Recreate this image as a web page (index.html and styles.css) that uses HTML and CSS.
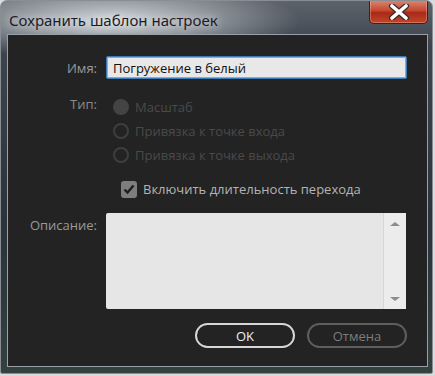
FILE: index.html
```html
<!DOCTYPE html>
<html lang="ru">
  <head>
    <meta charset="UTF-8" />
    <title>Сохранить шаблон настроек</title>
    <link rel="stylesheet" href="styles.css">
  </head>
  <body>
    <div class="window">
      <div class="titlebar">
        <span class="title">Сохранить шаблон настроек</span>
        <button class="close" aria-label="Закрыть">
          <svg width="22" height="16" viewBox="0 0 22 16">
            <path d="M4 2 L18 14 M18 2 L4 14" stroke="#3a2a2a" stroke-width="6" stroke-linecap="round" />
            <path d="M4 2 L18 14 M18 2 L4 14" stroke="#ffffff" stroke-width="3.6" stroke-linecap="round" />
          </svg>
        </button>
      </div>

      <div class="client">
        <div class="form">
          <label class="lbl lbl-name" for="name">Имя:</label>
          <input class="name" id="name" type="text" value="Погружение в белый" />

          <span class="lbl lbl-type">Тип:</span>
          <div class="radios">
            <div class="radio"><span class="dot checked"></span>Масштаб</div>
            <div class="radio"><span class="dot"></span>Привязка к точке входа</div>
            <div class="radio"><span class="dot"></span>Привязка к точке выхода</div>
          </div>

          <span></span>
          <div class="check">
            <span class="box">
              <svg width="14" height="14" viewBox="0 0 14 14">
                <path d="M2.5 7.5 L5.5 10.5 L11.5 3.5" fill="none" stroke="#1e1e1e" stroke-width="2.4" />
              </svg>
            </span>
            Включить длительность перехода
          </div>

          <label class="lbl lbl-desc" for="desc">Описание:</label>
          <div class="desc">
            <textarea id="desc"></textarea>
            <div class="scroll">
              <span class="arrow up"></span>
              <span class="arrow down"></span>
            </div>
          </div>
        </div>

        <div class="buttons">
          <button class="btn ok">OK</button>
          <button class="btn cancel">Отмена</button>
        </div>
      </div>
    </div>
  </body>
</html>
```

FILE: styles.css
```css
body {
  margin: 0;
  background: #d8dadc;
  font-family: "Open Sans", "Noto Sans", Arial, sans-serif;
  font-size: 13px;
}
.window {
  width: 431px;
  height: 372px;
  display: flex;
  flex-direction: column;
  border: 1px solid #8a8e94;
  border-radius: 7px 7px 2px 2px;
  background:
    radial-gradient(ellipse 190px 40px at 110px 20px, rgba(220, 224, 228, 0.95), rgba(220, 224, 228, 0) 100%),
    linear-gradient(180deg, #5c636b 0%, #3c444e 12%, #2a323c 60%, #33413f 100%);
  overflow: hidden;
}
.titlebar {
  height: 33px;
  display: flex;
  align-items: flex-start;
}
.title {
  margin: 9px 0 0 8px;
  font-family: "Noto Sans", "Open Sans", sans-serif;
  font-size: 15px;
  color: #1c1c2a;
  text-shadow: 0 0 8px rgba(255, 255, 255, 0.9);
}
.close {
  margin: -1px 4px 0 auto;
  width: 59px;
  height: 24px;
  padding: 0;
  border: 1px solid #4a1c18;
  border-top: none;
  border-radius: 0 0 5px 5px;
  background: linear-gradient(180deg, #d98a74 0%, #c54a32 45%, #a82a18 55%, #c2452a 100%);
  box-shadow: inset 0 0 0 1px rgba(255, 200, 180, 0.35);
  display: flex;
  align-items: center;
  justify-content: center;
}
.client {
  margin: 0 4px 6px 6px;
  flex: 1;
  background: #232323;
  border: 1px solid #9aa0a8;
  padding: 21px 20px 0 0;
  display: flex;
  flex-direction: column;
}
.form {
  display: grid;
  grid-template-columns: 89px 1fr;
  column-gap: 9px;
}
.lbl {
  text-align: right;
  color: #9a9a9a;
}
.lbl-name {
  align-self: center;
}
.name {
  height: 23px;
  box-sizing: border-box;
  border: 1px solid #3b7ab8;
  box-shadow: inset 0 0 0 1px #7aaee0;
  border-radius: 2px;
  background: #e8e8e8;
  padding: 0 6px;
  font-family: inherit;
  font-size: 13px;
  color: #111;
}
.lbl-type {
  margin-top: 16px;
  line-height: 18px;
  color: #8a8a8a;
}
.radios {
  margin-top: 16px;
  display: flex;
  flex-direction: column;
}
.radio {
  height: 24px;
  display: flex;
  align-items: center;
  gap: 6px;
  color: #4a4a4a;
  margin-left: 7px;
}
.dot {
  width: 12px;
  height: 12px;
  border: 2px solid #3e3e3e;
  border-radius: 50%;
}
.dot.checked {
  background: #444;
  border-color: #444;
}
.check {
  margin-top: 10px;
  height: 24px;
  display: flex;
  align-items: center;
  gap: 6px;
  color: #b4b4b4;
  margin-left: 15px;
}
.box {
  width: 16px;
  height: 17px;
  border-radius: 3px;
  background: #7e7e7e;
  display: flex;
  align-items: center;
  justify-content: center;
}
.lbl-desc {
  margin-top: 12px;
  padding-top: 3px;
}
.desc {
  margin-top: 12px;
  margin-right: 1px;
  height: 96px;
  display: flex;
  background: #e6e6e6;
  border-radius: 2px;
}
.desc textarea {
  flex: 1;
  border: none;
  background: transparent;
  resize: none;
}
.scroll {
  width: 22px;
  background: #ececec;
  border-left: 1px solid #d6d6d6;
  display: flex;
  flex-direction: column;
  justify-content: space-between;
  align-items: center;
  padding: 9px 0 8px;
}
.arrow {
  width: 0;
  height: 0;
  border-left: 5px solid transparent;
  border-right: 5px solid transparent;
}
.arrow.up {
  border-bottom: 4px solid #8c8c8c;
}
.arrow.down {
  border-top: 4px solid #8c8c8c;
}
.buttons {
  margin-top: 14px;
  display: flex;
  justify-content: flex-end;
  gap: 12px;
}
.btn {
  width: 100px;
  height: 25px;
  border-radius: 13px;
  background: transparent;
  font-family: inherit;
  font-size: 13px;
  padding: 0;
}
.ok {
  border: 2px solid #d6d6d6;
  color: #f0f0f0;
}
.cancel {
  border: 2px solid #5e5e5e;
  color: #7c7c7c;
}
```
